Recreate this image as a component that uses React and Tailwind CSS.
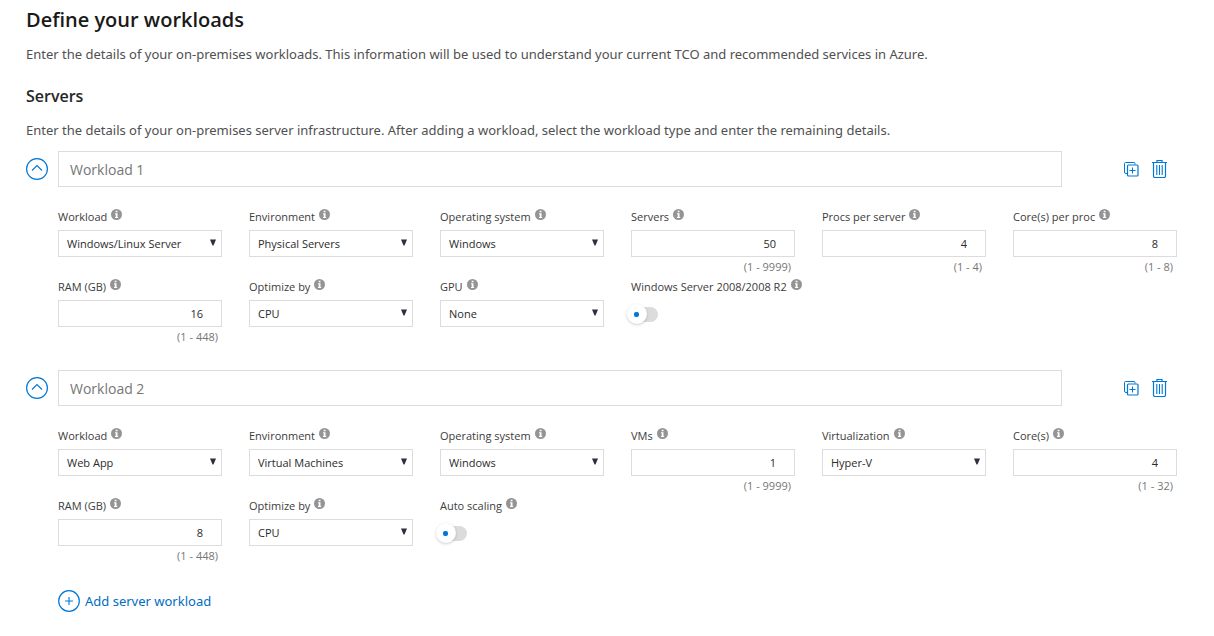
import { useId, useState } from "react";

const OPTIONS = {
  Workload: ["Windows/Linux Server", "Web App"],
  Environment: ["Physical Servers", "Virtual Machines"],
  "Operating system": ["Windows", "Linux"],
  "Optimize by": ["CPU", "Memory"],
  GPU: ["None"],
  Virtualization: ["Hyper-V", "VMware"],
};

const WORKLOADS = [
  {
    name: "Workload 1",
    fields: [
      { type: "select", label: "Workload", value: "Windows/Linux Server" },
      { type: "select", label: "Environment", value: "Physical Servers" },
      { type: "select", label: "Operating system", value: "Windows" },
      { type: "number", label: "Servers", value: 50, max: 9999 },
      { type: "number", label: "Procs per server", value: 4, max: 4 },
      { type: "number", label: "Core(s) per proc", value: 8, max: 8 },
      { type: "number", label: "RAM (GB)", value: 16, max: 448 },
      { type: "select", label: "Optimize by", value: "CPU" },
      { type: "select", label: "GPU", value: "None" },
      { type: "toggle", label: "Windows Server 2008/2008 R2" },
    ],
  },
  {
    name: "Workload 2",
    fields: [
      { type: "select", label: "Workload", value: "Web App" },
      { type: "select", label: "Environment", value: "Virtual Machines" },
      { type: "select", label: "Operating system", value: "Windows" },
      { type: "number", label: "VMs", value: 1, max: 9999 },
      { type: "select", label: "Virtualization", value: "Hyper-V" },
      { type: "number", label: "Core(s)", value: 4, max: 32 },
      { type: "number", label: "RAM (GB)", value: 8, max: 448 },
      { type: "select", label: "Optimize by", value: "CPU" },
      { type: "toggle", label: "Auto scaling" },
    ],
  },
];

function InfoIcon() {
  return (
    <svg className="mb-1 size-[11px] shrink-0" viewBox="0 0 11 11" aria-hidden="true">
      <circle cx="5.5" cy="5.5" r="5.5" fill="#949494" />
      <path d="M4.7 1.8h1.8v1.5H4.7zM4 4.3h2.5v3.6h.7v1H4v-1h.7V5.3H4z" fill="#fff" />
    </svg>
  );
}

function ChevronCircle() {
  return (
    <svg className="size-[22px]" viewBox="0 0 22 22" fill="none" stroke="#0078d7" aria-hidden="true">
      <circle cx="11" cy="11" r="10.4" strokeWidth="1.2" />
      <path d="M6 12.500l5-5 5 5" strokeWidth="1.1" />
    </svg>
  );
}

function CopyIcon() {
  return (
    <svg className="h-4 w-[15px]" viewBox="0 0 15 16" fill="none" stroke="#0078d7" aria-hidden="true">
      <path d="M3 12.500H2A1.500 1.500 0 0 1 .5 11V2.500A1 1 0 0 1 1.500 1.500h8.500a1 1 0 0 1 1 1V3.500" />
      <rect x="3.500" y="4" width="10.500" height="11" rx="1" strokeWidth="1.200" />
      <path d="M8.500 6.500v6M5.500 9.500h6" />
    </svg>
  );
}

function TrashIcon() {
  return (
    <svg className="h-[18px] w-[15px]" viewBox="0 0 15 18" fill="none" stroke="#0078d7" aria-hidden="true">
      <path d="M0 2.500h15M5 2.500V.500h5v2" strokeWidth="1.200" />
      <path d="M1.500 2.500v13.500a1.500 1.500 0 0 0 1.500 1.500h9a1.500 1.500 0 0 0 1.500-1.500V2.500" strokeWidth="1.200" />
      <path d="M4.800 5v10M7.500 5v10M10.200 5v10" strokeWidth="1.100" />
    </svg>
  );
}

function PlusCircle() {
  return (
    <svg className="size-[22px]" viewBox="0 0 22 22" fill="none" stroke="#0078d7" aria-hidden="true">
      <circle cx="11" cy="11" r="10.300" strokeWidth="1.200" />
      <path d="M11 7v8M7 11h8" strokeWidth="1.100" />
    </svg>
  );
}

function Control({ field, id }) {
  if (field.type === "select") {
    return (
      <div className="relative">
        <select
          id={id}
          defaultValue={field.value}
          className="block h-[27px] w-full appearance-none border border-[#dcdcdc] bg-white pt-0.5 pr-5 pl-2 text-[11px] text-[#2b2b2b]"
        >
          {OPTIONS[field.label].map((option) => (
            <option key={option}>{option}</option>
          ))}
        </select>
        <svg
          className="pointer-events-none absolute top-[9px] right-[6px] h-[7px] w-[6px]"
          viewBox="0 0 6 7"
          aria-hidden="true"
        >
          <path d="M0 .5h6L3.500 6.500h-1z" fill="#2f2f3d" />
        </svg>
      </div>
    );
  }
  if (field.type === "number") {
    return (
      <>
        <input
          id={id}
          type="number"
          min={1}
          max={field.max}
          defaultValue={field.value}
          aria-describedby={`${id}-range`}
          className="block h-[27px] w-full border border-[#dcdcdc] bg-white pr-[3px] text-right text-[11px] text-[#2b2b2b]"
        />
        <p id={`${id}-range`} className="pr-1 text-right text-[11px] leading-5 text-[#767676]">
          (1 - {field.max})
        </p>
      </>
    );
  }
  return (
    <div className="flex h-7 items-center">
      <input
        id={id}
        type="checkbox"
        role="switch"
        className="relative h-[15px] w-[27px] appearance-none rounded-full bg-[#dcdcdc] before:absolute before:-top-[3px] before:-left-1 before:size-5 before:rounded-full before:bg-white before:shadow-[0_1px_3px_rgba(0,0,0,0.2)] after:absolute after:top-[5px] after:left-[3px] after:size-[5px] after:rounded-xs after:bg-[#0078d7] checked:before:left-3 checked:after:left-5"
      />
    </div>
  );
}

function Field({ field }) {
  const id = useId();
  return (
    <div className="h-[70px] min-w-0">
      <div className="flex h-6 items-center gap-1 pb-[3px]">
        <label htmlFor={id} className="text-[11px] leading-5 whitespace-nowrap text-[#3c3c3c]">
          {field.label}
        </label>
        <InfoIcon />
      </div>
      <Control field={field} id={id} />
    </div>
  );
}

function Workload({ workload }) {
  const [open, setOpen] = useState(true);
  return (
    <section className="mb-6" aria-label={workload.name}>
      <div className="flex items-center">
        <button
          type="button"
          aria-label="Toggle details"
          aria-expanded={open}
          onClick={() => setOpen(!open)}
          className="w-8 shrink-0"
        >
          <ChevronCircle />
        </button>
        <input
          type="text"
          aria-label="Workload name"
          placeholder={workload.name}
          className="h-9 min-w-0 flex-1 border border-[#dcdcdc] px-[11px] text-sm text-[#333] placeholder:text-[#767676]"
        />
        <div className="flex w-[115px] shrink-0 items-center justify-end gap-[13px] pr-[10px]">
          <button type="button" aria-label="Duplicate workload">
            <CopyIcon />
          </button>
          <button type="button" aria-label="Delete workload">
            <TrashIcon />
          </button>
        </div>
      </div>
      {open && (
        <div className="mt-[19px] grid grid-cols-6 gap-x-[27px] pl-8">
          {workload.fields.map((field) => (
            <Field key={field.label} field={field} />
          ))}
        </div>
      )}
    </section>
  );
}

export default function App() {
  return (
    <main className="min-h-screen bg-white pt-1 pr-[37px] pb-4 pl-[26px] font-['Open_Sans','Noto_Sans',sans-serif]">
      <h1 className="text-xl leading-8 font-semibold text-[#1a1a1a]">Define your workloads</h1>
      <p className="mt-2 font-['Noto_Sans',sans-serif] text-[13px] leading-5 text-[#505050]">
        Enter the details of your on-premises workloads. This information will be used to understand your current TCO
        and recommended services in Azure.
      </p>
      <h2 className="mt-5 text-base leading-6 font-semibold text-[#262626]">Servers</h2>
      <p className="mt-3 mb-[11px] font-['Noto_Sans',sans-serif] text-[13px] leading-5 text-[#505050]">
        Enter the details of your on-premises server infrastructure. After adding a workload, select the workload type
        and enter the remaining details.
      </p>
      {WORKLOADS.map((workload) => (
        <Workload key={workload.name} workload={workload} />
      ))}
      <button
        type="button"
        className="ml-8 flex items-center gap-[5px] font-['Noto_Sans',sans-serif] text-[13px] leading-6 text-[#006cc4]"
      >
        <PlusCircle />
        Add server workload
      </button>
    </main>
  );
}
